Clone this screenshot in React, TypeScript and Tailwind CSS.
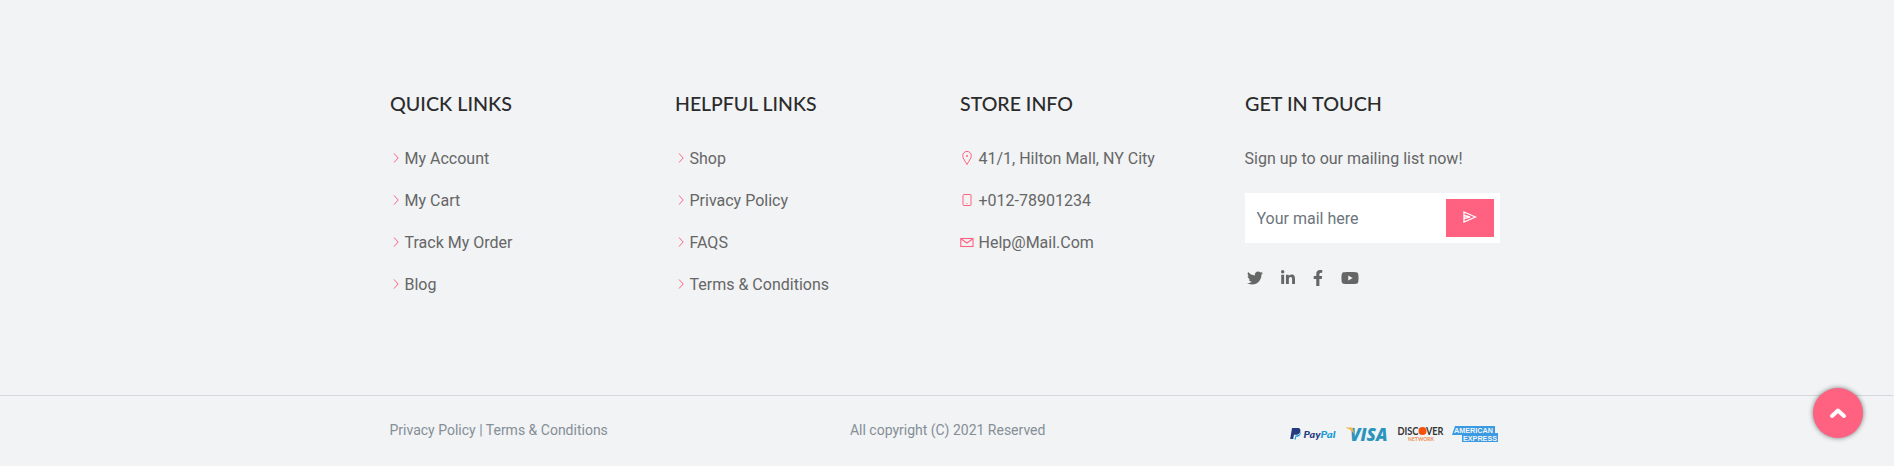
import React from "react";
import { FaTwitter, FaLinkedinIn, FaFacebookF, FaYoutube } from "react-icons/fa";

const quickLinks = ["My Account", "My Cart", "Track My Order", "Blog"];
const helpfulLinks = ["Shop", "Privacy Policy", "FAQS", "Terms & Conditions"];

const PinIcon = () => (
  <svg width="14" height="14" viewBox="0 0 14 14" fill="none" stroke="currentColor" strokeWidth="1" className="overflow-visible">
    <path d="M7 13.500C5.500 10.500 2.700 7.500 2.700 4.700a4.300 4.300 0 0 1 8.600 0C11.300 7.500 8.500 10.500 7 13.500z" />
    <circle cx="7" cy="5" r="1" fill="currentColor" stroke="none" />
  </svg>
);

const PhoneIcon = () => (
  <svg width="14" height="14" viewBox="0 0 14 14" fill="none" stroke="currentColor" strokeWidth="1">
    <rect x="3" y="1.500" width="8" height="11" rx="1" />
    <path d="M6.500 10.500h1" />
  </svg>
);

const MailIcon = () => (
  <svg width="14" height="14" viewBox="0 0 14 14" fill="none" stroke="currentColor" strokeWidth="1.100">
    <rect x="0.800" y="3.500" width="12.200" height="8" />
    <path d="M1.200 4l5.700 4 5.700-4" />
  </svg>
);

const storeInfo = [
  { icon: PinIcon, text: "41/1, Hilton Mall, NY City" },
  { icon: PhoneIcon, text: "+012-78901234" },
  { icon: MailIcon, text: "Help@Mail.Com" },
];

function Heading({ children, width }: { children: string; width: number }) {
  return (
    <h4 className="mb-[30px] h-6">
      <svg width={width + 4} height="24" className="block overflow-visible" role="img">
        <text x="0" y="18" textLength={width} lengthAdjust="spacingAndGlyphs" className="fill-[#2b2b2b] font-['Lato',sans-serif] text-[20px] font-medium">
          {children}
        </text>
      </svg>
    </h4>
  );
}

function LinkList({ items }: { items: string[] }) {
  return (
    <ul className="flex flex-col gap-[18px]">
      {items.map((item) => (
        <li key={item} className="flex h-6 items-center leading-6">
          <svg width="15" height="12" viewBox="0 0 15 12" fill="none" stroke="#ff6180" strokeWidth="1" className="mb-[3px]">
            <path d="M4 1.500l4.200 4.500-4.200 4.500" />
          </svg>
          <a href="#">{item}</a>
        </li>
      ))}
    </ul>
  );
}

function Payments() {
  return (
    <svg width="212" height="20" viewBox="1287 424 212 20" className="block overflow-visible">
      <path d="M1292 428h5.500c3 0 3.400 2 2.600 4.200-.8 2-2.400 2.600-4.600 2.600h-1.500l-.8 4.200h-3z" fill="#253b80" />
      <path d="M1294.500 439.500l1-4c3 0 4.500-1 5-4 .7 3-.8 5.300-4.200 5.300l-.6 2.700z" fill="#179bd7" />
      <g className="font-['Lato',sans-serif] italic" fontWeight="900" fontSize="9.500">
        <text x="1303.500" y="437.500" fill="#253b80" textLength="17" lengthAdjust="spacingAndGlyphs">Pay</text>
        <text x="1320.500" y="437.500" fill="#179bd7" textLength="15" lengthAdjust="spacingAndGlyphs">Pal</text>
      </g>
      <text x="1350" y="440.500" className="font-['Open_Sans',sans-serif] italic" fontWeight="800" fontSize="18" fill="#2c93bd" textLength="37.500" lengthAdjust="spacingAndGlyphs">VISA</text>
      <path d="M1346 427.500h6.500l2 6.500c-2-3-5-5-8.500-6z" fill="#f7b648" />
      <g className="font-['Lato',sans-serif]" fontWeight="700" fontSize="11" fill="#333">
        <text x="1397.500" y="435" textLength="21" lengthAdjust="spacingAndGlyphs">DISC</text>
        <circle cx="1422.500" cy="431" r="4" fill="#f4520b" />
        <text x="1426" y="435" textLength="17.500" lengthAdjust="spacingAndGlyphs">VER</text>
      </g>
      <text x="1408" y="441" className="font-['Lato',sans-serif]" fontWeight="700" fontSize="5" fill="#f08a50" textLength="26" lengthAdjust="spacingAndGlyphs">NETWORK</text>
      <path d="M1455 426h40v7h3v9h-36v-7h-10z" fill="#3a9ae2" />
      <g className="font-['Liberation_Sans',sans-serif]" fontWeight="700" fontSize="8" fill="#f1f3f5">
        <text x="1454" y="433" textLength="39" lengthAdjust="spacingAndGlyphs">AMERICAN</text>
        <text x="1463" y="441" textLength="34" lengthAdjust="spacingAndGlyphs">EXPRESS</text>
      </g>
    </svg>
  );
}

export default function App() {
  return (
    <div className="relative h-[466px] overflow-hidden bg-[#f1f3f5] font-['Roboto',sans-serif] text-base text-[#666]">
      <footer className="flex h-full flex-col">
        <div className="flex h-[395px] pt-[93px] pl-[389.5px]">
          <section className="w-[285px]">
            <Heading width={122}>QUICK LINKS</Heading>
            <LinkList items={quickLinks} />
          </section>
          <section className="w-[285px]">
            <Heading width={141.5}>HELPFUL LINKS</Heading>
            <LinkList items={helpfulLinks} />
          </section>
          <section className="w-[285px]">
            <Heading width={113}>STORE INFO</Heading>
            <ul className="flex flex-col gap-[18px]">
              {storeInfo.map(({ icon: Icon, text }) => (
                <li key={text} className="flex h-6 items-center gap-[4.5px] leading-6">
                  <span className="mb-0.5 ml-[0.5px] text-[#ff6180]">
                    <Icon />
                  </span>
                  {text}
                </li>
              ))}
            </ul>
          </section>
          <section className="w-[255px]">
            <Heading width={137}>GET IN TOUCH</Heading>
            <p className="leading-6">Sign up to our mailing list now!</p>
            <form className="mt-[22px] ml-[0.5px] flex h-[50px] w-[255px] bg-white py-1.5 pr-1.5 pl-[11.5px]">
              <input placeholder="Your mail here" className="min-w-0 flex-1 pt-0.5 outline-none placeholder:text-[#6c757d]" />
              <button type="button" className="flex h-[38px] w-12 items-center justify-center bg-[#ff6180] pb-0.5 text-white">
                <svg width="14" height="12" viewBox="0 0 14 12" fill="none" stroke="currentColor" strokeWidth="1.300">
                  <path d="M1 1l11.500 5L1 11V1zM1 4.500l6 1.500-6 1.500" />
                </svg>
              </button>
            </form>
            <div className="mt-[27px] flex h-4 items-center pl-[2px] text-[#666]">
              <FaTwitter className="size-4" />
              <FaLinkedinIn className="ml-[17px] size-4" />
              <FaFacebookF className="ml-3.5 size-4" />
              <FaYoutube className="ml-[15.5px] size-[18px]" />
            </div>
          </section>
        </div>
        <div className="mr-px flex h-[71px] border-t border-[#d6d7da] pl-[389.5px] text-sm text-[#868e96]">
          <div className="flex h-[67px] w-[1110px] items-center justify-between">
            <p>Privacy Policy | Terms &amp; Conditions</p>
            <p>All copyright (C) 2021 Reserved</p>
            <div className="pt-2">
              <Payments />
            </div>
          </div>
        </div>
      </footer>
      <button type="button" className="absolute top-[388px] left-[1813px] flex size-[50px] items-center justify-center rounded-full bg-[#ff6180] text-white shadow-[0_0_5px_rgba(0,0,0,0.5)]">
        <svg width="18" height="12" viewBox="0 0 18 12" fill="none" stroke="currentColor" strokeWidth="4" strokeLinecap="round" strokeLinejoin="round">
          <path d="M3 9l6-5.500L15 9" />
        </svg>
      </button>
    </div>
  );
}
